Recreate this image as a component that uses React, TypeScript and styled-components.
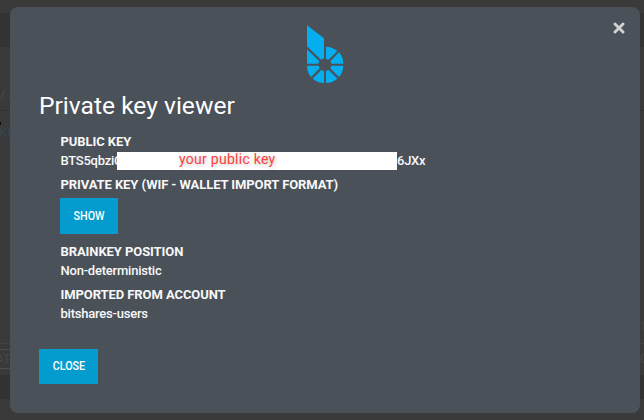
import React from 'react';
import styled, { createGlobalStyle } from 'styled-components';

const GlobalStyle = createGlobalStyle`
  * { box-sizing: border-box; }
  body { margin: 0; background: #3a3a3a; font-family: Roboto, "Liberation Sans", sans-serif; overflow: hidden; }
`;

const Page = styled.div`
  position: relative;
  width: 644px;
  height: 420px;
  padding: 7px 4px 7px 10px;
  overflow: hidden;
`;

const Backdrop = styled.div`
  position: absolute;
  inset: 0;
  display: grid;
  grid-template-rows: 13px 34px 63px 1px 232px 1px 31px 24px 21px;
`;

const Band = styled.div<{ $tone: string }>`
  background: ${(p) => p.$tone};
`;

const Ghost = styled.span<{ $x: number; $y: number; $size: number; $tone: string; $weight?: number }>`
  position: absolute;
  left: ${(p) => p.$x}px;
  top: ${(p) => p.$y}px;
  font-size: ${(p) => p.$size}px;
  line-height: 16px;
  font-weight: ${(p) => p.$weight ?? 400};
  color: ${(p) => p.$tone};
  white-space: nowrap;
`;

const GhostBox = styled.div`
  position: absolute;
  left: 0;
  top: 349px;
  width: 10px;
  height: 20px;
  border: solid #4a4e4e;
  border-width: 1px 0;
`;

const DarkMark = styled.div`
  position: absolute;
  left: 0;
  top: 122px;
  width: 1px;
  height: 3px;
  background: #0b0b0b;
`;

const Modal = styled.main`
  position: relative;
  display: flex;
  flex-direction: column;
  align-items: flex-start;
  width: 630px;
  height: 406px;
  padding: 18px 29px 29px;
  border-radius: 8px;
  background: #4a5159;
  color: #fff;
`;

const Dismiss = styled.button`
  position: absolute;
  top: 15px;
  right: 15px;
  width: 12px;
  height: 12px;
  padding: 0;
  border: 0;
  background: none;
  svg { display: block; }
`;

const LogoRow = styled.div`
  align-self: stretch;
  height: 60px;
  padding-left: 267px;
  svg { display: block; }
`;

const Title = styled.h1`
  margin: 5px 0 0;
  font-size: 24.6px;
  line-height: 31px;
  font-weight: 400;
`;

const Details = styled.dl`
  display: flex;
  flex-direction: column;
  align-items: flex-start;
  margin: 11px 0 0 21.5px;
  font-size: 13px;
`;

const Label = styled.dt<{ $width: number }>`
  width: ${(p) => p.$width}px;
  height: 19px;
  line-height: 19px;
  font-weight: 700;
  letter-spacing: -0.08px;
  white-space: nowrap;
  color: #f8f8f8;
`;

const Value = styled.dd<{ $spacing?: number }>`
  display: flex;
  height: 19px;
  margin: 0 0 5px;
  line-height: 19px;
  font-weight: 500;
  letter-spacing: ${(p) => p.$spacing ?? 0}px;
  color: #f8f8f8;
`;

const KeyStart = styled.span`
  width: 56.5px;
  overflow: hidden;
  white-space: nowrap;
`;

const Redaction = styled.span`
  width: 280px;
  height: 18px;
  margin-top: 1px;
  padding-left: 62px;
  background: #fff;
  color: #ff4040;
  font-size: 14px;
  line-height: 15px;
  font-weight: 400;
  letter-spacing: 0.27px;
  text-shadow: 1px 1px 4px rgba(0, 0, 0, 0.28);
`;

const Action = styled.button<{ $width: number; $height: number }>`
  display: flex;
  align-items: center;
  justify-content: center;
  width: ${(p) => p.$width}px;
  height: ${(p) => p.$height}px;
  padding: 0 0 2px;
  border: 0;
  background: #049cce;
  color: #fff;
  font: 500 12.5px Roboto, sans-serif;
`;

const Condensed = styled.span`
  display: block;
  transform: scaleX(0.86);
`;

const ShowRow = styled.dd`
  margin: 4px 0 8px -0.5px;
`;

const Footer = styled.footer`
  margin-top: auto;
`;

const Logo = () => (
  <svg width="38" height="59" viewBox="48 30 114 177" aria-label="BitShares">
    <g fill="#05aeef">
      <path d="M51 31 102 70V130L93 134 51 94Z" />
      <path d="M51 103 88 139 85 146H51Z" />
      <path d="M108 95A54 54 0 0 1 142 108L116 134 108 131Z" />
      <path d="M147 112A54 54 0 0 1 160 146H124L121 139Z" />
      <path d="M124 152H160A54 54 0 0 1 147 186L121 160Z" />
      <path d="M116 165 142 191A54 54 0 0 1 108 204V168Z" />
      <path d="M102 168V204A54 54 0 0 1 68 191L94 165Z" />
      <path d="M89 160 63 186A54 54 0 0 1 51 152H86Z" />
    </g>
  </svg>
);

export default function App() {
  return (
    <>
      <GlobalStyle />
      <Page>
        <Backdrop aria-hidden="true">
          <Band $tone="#3a3a3a" />
          <Band $tone="#333333" />
          <Band $tone="#3a3a3a" />
          <Band $tone="#333333" />
          <Band $tone="#3a3a3a" />
          <Band $tone="#424444" />
          <Band $tone="#393939" />
          <Band $tone="#323232" />
          <Band $tone="#3a3a3a" />
          <Ghost $x={0} $y={87} $size={13} $tone="#484848">/ A</Ghost>
          <Ghost $x={-1} $y={125} $size={13} $tone="#354446" $weight={700}>KK</Ghost>
          <DarkMark />
          <GhostBox />
          <Ghost $x={-4} $y={351} $size={12} $tone="#484848">ATE</Ghost>
          <Ghost $x={640} $y={319} $size={12} $tone="#444444">T</Ghost>
          <Ghost $x={640} $y={351} $size={13} $tone="#4b4b4b">0</Ghost>
        </Backdrop>
        <Modal role="dialog">
          <Dismiss aria-label="Close dialog">
            <svg width="12" height="12" viewBox="0 0 12 12" stroke="#d0d2d4" strokeWidth="2.9" strokeLinecap="round">
              <path d="M2 2 10 10M10 2 2 10" />
            </svg>
          </Dismiss>
          <LogoRow><Logo /></LogoRow>
          <Title>Private key viewer</Title>
          <Details>
            <Label $width={80}>PUBLIC KEY</Label>
            <Value $spacing={-0.25}>
              <KeyStart>BTS5qbziC</KeyStart>
              <Redaction>your public key</Redaction>
              <span>6JXx</span>
            </Value>
            <Label $width={290}>PRIVATE KEY (WIF - WALLET IMPORT FORMAT)</Label>
            <ShowRow>
              <Action $width={58} $height={36}><Condensed>SHOW</Condensed></Action>
            </ShowRow>
            <Label $width={130}>BRAINKEY POSITION</Label>
            <Value $spacing={-0.22}>Non-deterministic</Value>
            <Label $width={180}>IMPORTED FROM ACCOUNT</Label>
            <Value $spacing={-0.22}>bitshares-users</Value>
          </Details>
          <Footer>
            <Action $width={59} $height={35}><Condensed>CLOSE</Condensed></Action>
          </Footer>
        </Modal>
      </Page>
    </>
  );
}
